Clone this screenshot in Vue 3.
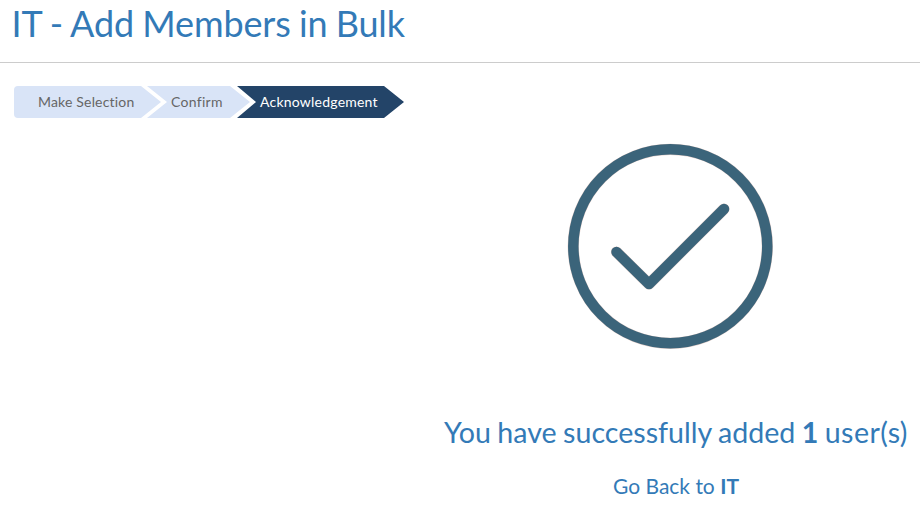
<script setup>
const steps = [
  { label: 'Make Selection', kind: 'first' },
  { label: 'Confirm', kind: 'middle' },
  { label: 'Acknowledgement', kind: 'active' },
]
</script>

<template>
  <main class="page">
    <header class="heading"><h1>IT - Add Members in Bulk</h1></header>
    <nav class="steps">
      <span v-for="s in steps" :key="s.label" class="step" :class="s.kind">{{ s.label }}</span>
    </nav>
    <section class="result">
      <svg class="tick" viewBox="0 0 206 206" fill="none">
        <circle cx="103.3" cy="103.3" r="97" class="edge" />
        <circle cx="103.3" cy="103.3" r="97" class="line" />
        <path d="M49.5 109L82 141L157 66" class="edge" />
        <path d="M49.5 109L82 141L157 66" class="line" />
      </svg>
      <h2>You have successfully added <b>1</b> <span class="unit">user(s)</span></h2>
      <a class="back">Go Back to <b>IT</b></a>
    </section>
  </main>
</template>

<style>
body { margin: 0; background: #fff; overflow: hidden; }
</style>
<style scoped>
.page { width: 920px; height: 507px; overflow: hidden; font-family: Lato, sans-serif; font-variant-ligatures: none; color: #337ab7; }
.heading { height: 62px; border-bottom: 1px solid #ccc; padding-left: 11.5px; }
h1 { margin: 0; font-size: 36px; line-height: 46px; font-weight: 400; white-space: nowrap; letter-spacing: -0.13px; word-spacing: -0.8px; }
.steps { display: flex; margin: 23px 0 0 14px; height: 32px; }
.step { box-sizing: border-box; font-size: 14px; line-height: 32px; white-space: nowrap; color: #666; background: #d9e4f7; }
.first { width: 147px; padding-left: 24px; border-radius: 4px 0 0 4px; letter-spacing: 0.18px; clip-path: polygon(0 0, 127px 0, 100% 50%, 127px 100%, 0 100%); }
.middle { width: 103px; margin-left: -14px; padding-left: 24px; letter-spacing: 0.3px; clip-path: polygon(0 0, 83px 0, 100% 50%, 83px 100%, 0 100%, 20px 50%); }
.active { width: 168px; margin-left: -14px; padding-left: 24px; letter-spacing: 0.22px; color: #fff; background: #234468; clip-path: polygon(1px 0, 148px 0, 100% 50%, 148px 100%, 1px 100%, 20px 50%); }
.result { width: 480px; margin: 25px 0 0 436px; display: flex; flex-direction: column; align-items: center; }
.tick { width: 206px; height: 206px; margin-right: 12px; }
.line { stroke: #3b647a; stroke-width: 10.5; stroke-linecap: round; stroke-linejoin: round; }
.edge { stroke: #c99b8f; stroke-opacity: 0.5; stroke-width: 11.2; stroke-linecap: round; stroke-linejoin: round; }
h2 { font-size: 28.6px; line-height: 40px; margin: 63px 0 0; font-weight: 400; white-space: nowrap; word-spacing: -0.9px; }
.unit { letter-spacing: 0.4px; }
.back { font-size: 21px; line-height: 30px; margin-top: 19px; white-space: nowrap; }
</style>
